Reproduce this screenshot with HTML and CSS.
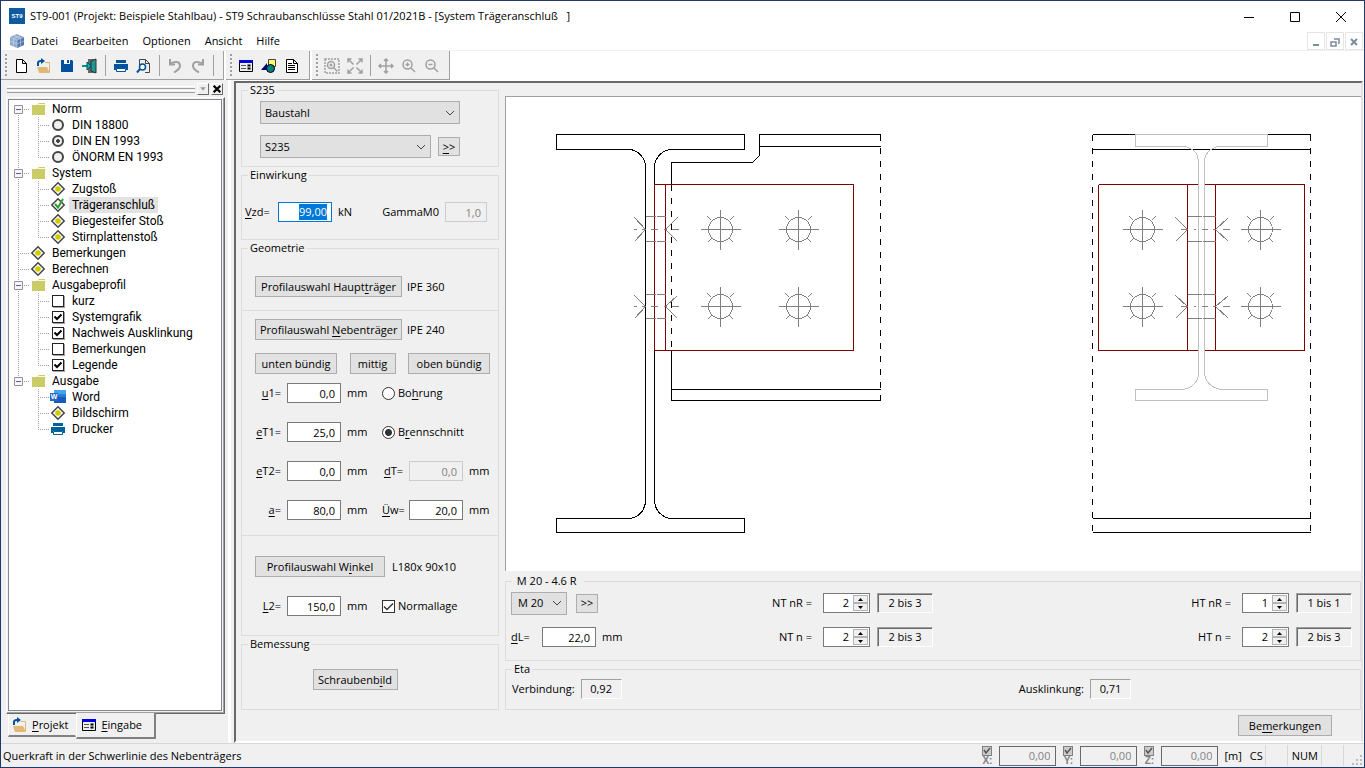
FILE: index.html
```html
<!DOCTYPE html>
<html lang="de">

<head>
    <meta charset="UTF-8">
    <meta name="viewport" content="width=device-width, initial-scale=1.0">
    <title>ST9-001 (Projekt: Beispiele Stahlbau)</title>
    <link rel="stylesheet" href="styles.css">
</head>

<body>
    <svg class="defs" aria-hidden="true">
        <symbol id="folder" viewBox="-1 0 16 16">
            <path d="M1 4h5l2-2h6v12H1z" fill="#cccc66" />
            <path d="M7 3.500h7" stroke="#fffbe8" />
        </symbol>
        <symbol id="diamond" viewBox="0 0 16 16">
            <path d="M8 1.800L14.200 8L8 14.200L1.800 8z" fill="#fff" stroke="#444" stroke-width="1.500" />
            <circle cx="8" cy="8" r="2.800" fill="#cccc00" />
        </symbol>
        <symbol id="printer" viewBox="0 0 16 16">
            <path d="M3 2h10v3H3zM1 6h14v6h-2v-2H3v2H1z" fill="currentColor" />
            <path d="M3.500 10.500h9v3h-9z" fill="#fff" stroke="currentColor" />
        </symbol>
        <symbol id="open" viewBox="0 0 16 16">
            <path d="M9 4.500h4.500V14" fill="none" stroke="#deb777" />
            <path d="M1 9h10l3 6H3z" fill="#e0b878" />
            <path d="M2 8V5q0-2 3-2h2" fill="none" stroke="#00529b" stroke-width="2" />
            <path d="M5 0l4 3l-4 3z" fill="#00529b" />
        </symbol>
        <symbol id="form" viewBox="0 0 16 16">
            <path d="M1.500 2.500h13v11h-13z" fill="#eee" stroke="#000" />
            <path d="M1 2h14v3H1z" fill="#0000e0" />
            <path d="M3 7.500h5M3 10.500h5" stroke="#555" />
            <path d="M9.500 7.500h3M9.500 10.500h3" stroke="#000" stroke-width="2" />
        </symbol>
        <symbol id="bolt" viewBox="-20 -20 40 40" overflow="visible">
            <circle r="12" />
            <path d="M-20 0H20M0-20V20M-13-13l4 4M13-13l-4 4M-13 13l4-4M13 13l-4-4" />
        </symbol>
    </svg>

    <header class="titlebar">
        <svg class="appicon" viewBox="0 0 16 16">
            <path d="M0 0h16v16H0z" fill="#0f5ba0" />
            <text x="8" y="10" text-anchor="middle">ST9</text>
        </svg>
        <h1>ST9-001 (Projekt: Beispiele Stahlbau) - ST9 Schraubanschlüsse Stahl 01/2021B - [System Trägeranschluß&nbsp;&nbsp; ]</h1>
        <div class="winbuttons">
            <button aria-label="Minimieren"><svg viewBox="0 0 12 12"><path d="M1 6.500h10" /></svg></button>
            <button aria-label="Maximieren"><svg viewBox="0 0 12 12"><path d="M1.500 1.500h9v9h-9z" /></svg></button>
            <button aria-label="Schließen"><svg viewBox="0 0 12 12"><path d="M1 1l10 10M11 1L1 11" /></svg></button>
        </div>
    </header>

    <nav class="menubar">
        <svg class="cube" viewBox="0 0 16 16">
            <path d="M8 1l7 3v8l-7 3l-7-3V4z" fill="#8fabcf" />
            <path d="M8 7v8l7-3V4z" fill="#5579ac" />
            <path d="M1 4l7 3l7-3M8 7v8M1 8l7 3l7-3M4.500 5.500v8M11.500 5.500v8M4.500 2.500l7 3M11.500 2.500l-7 3" fill="none" stroke="#d5e0ef" stroke-width="0.500" />
        </svg>
        <a href="#">Datei</a>
        <a href="#">Bearbeiten</a>
        <a href="#">Optionen</a>
        <a href="#">Ansicht</a>
        <a href="#">Hilfe</a>
        <div class="mdibuttons">
            <button aria-label="Fenster minimieren"><svg viewBox="0 0 10 10"><path d="M2 8h6" /></svg></button>
            <button aria-label="Fenster wiederherstellen"><svg viewBox="0 0 10 10"><path d="M4 2h5v4H8M1 5h5v4H1z" stroke-width="1.500" /></svg></button>
            <button aria-label="Fenster schließen"><svg viewBox="0 0 10 10"><path d="M2 2l6 6M8 2L2 8" /></svg></button>
        </div>
    </nav>

    <div class="toolbars">
        <div class="band">
            <i class="grip"></i>
            <button aria-label="Neu"><svg viewBox="0 0 16 16"><path d="M3.500 1.500h6l4 4v9h-10zM9.500 1.500v4h4" fill="#fff" stroke="#000" /></svg></button>
            <button aria-label="Öffnen"><svg><use href="#open" /></svg></button>
            <button aria-label="Speichern"><svg viewBox="0 0 16 16"><path d="M2 2h11l1 1v11H2z" fill="#0050a0" /><path d="M5 2h6v4H5z" fill="#fff" /><path d="M8 2h2v3H8z" fill="#0050a0" /></svg></button>
            <button aria-label="Beenden"><svg viewBox="0 0 16 16"><path d="M6 1h8v14H6z" fill="#666" /><path d="M9 3l5-2v14l-5-2z" fill="#1c9a93" stroke="#333" /><path d="M0 8h6" stroke="#00948c" stroke-width="2" /><path d="M5 4l4 4l-4 4z" fill="#00b8ac" stroke="#056" /></svg></button>
            <i class="sep"></i>
            <button class="blue" aria-label="Drucken"><svg><use href="#printer" /></svg></button>
            <button aria-label="Vorschau"><svg viewBox="0 0 16 16"><path d="M3.500 7V1.500h6l4 4v9H9M9.500 1.500v4h4" fill="none" stroke="#444" /><circle cx="6.500" cy="9" r="3" fill="#fff" stroke="#00529b" stroke-width="1.500" /><path d="M4 11l-3 3.500" stroke="#00529b" stroke-width="2" /></svg></button>
            <i class="sep"></i>
            <button class="off" aria-label="Rückgängig"><svg viewBox="0 0 16 16"><path d="M3 5.500q10-4 10 2.500Q13 11 7 14.500" /><path d="M3 1v5.500h5" /></svg></button>
            <button class="off" aria-label="Wiederholen"><svg viewBox="0 0 16 16"><path d="M13 5.500Q3 1.500 3 8Q3 11 9 14.500" /><path d="M13 1v5.500H8" /></svg></button>
            <i class="sep"></i>
        </div>
        <div class="band">
            <i class="grip"></i>
            <button aria-label="Eingabe"><svg><use href="#form" /></svg></button>
            <button aria-label="Grafik"><svg viewBox="0 0 16 16"><path d="M7.500 1.500h7v7h-7z" fill="#ffff66" stroke="#444" /><path d="M0 12l6-7v7z" fill="#000080" /><circle cx="9.500" cy="10.500" r="4" fill="#008080" stroke="#000" /></svg></button>
            <button aria-label="Ausgabe"><svg viewBox="0 0 16 16"><path d="M2.500 1.500h7l4 4v9h-11zM9.500 1.500v4h4" fill="#fff" stroke="#000" /><path d="M4 5.500h4M4 7.500h7M4 9.500h7M4 11.500h7" stroke="#000" /></svg></button>
        </div>
        <div class="band">
            <i class="grip"></i>
            <button class="off thin" aria-label="Ausschnitt"><svg viewBox="0 0 16 16"><path d="M1 1h14v14H1z" stroke-dasharray="2 1" /><circle cx="7" cy="7" r="3.500" /><path d="M9.500 9.500l4 4M5.500 7h3M7 5.500v3" /></svg></button>
            <button class="off thin" aria-label="Alles zeigen"><svg viewBox="0 0 16 16"><path d="M1 4.500V1h3.500M11.500 1H15v3.500M15 11.500V15h-3.500M4.500 15H1v-3.500M1 1l5.500 5.500M15 1L9.500 6.500M15 15L9.500 9.500M1 15l5.500-5.500" /></svg></button>
            <i class="sep"></i>
            <button class="off thin" aria-label="Verschieben"><svg viewBox="0 0 16 16"><path d="M1 8h14M8 1v14M3 6L1 8l2 2M13 6l2 2l-2 2M6 3l2-2l2 2M6 13l2 2l2-2" /></svg></button>
            <button class="off thin" aria-label="Vergrößern"><svg viewBox="0 0 16 16"><circle cx="6.500" cy="6.500" r="4.500" /><path d="M10 10l4 4M4.500 6.500h4M6.500 4.500v4" /></svg></button>
            <button class="off thin" aria-label="Verkleinern"><svg viewBox="0 0 16 16"><circle cx="6.500" cy="6.500" r="4.500" /><path d="M10 10l4 4M4.500 6.500h4" /></svg></button>
        </div>
    </div>

    <div class="workspace">
        <aside class="sidebar">
            <div class="dockbar">
                <i class="docklines"></i>
                <button class="dockbtn" aria-label="Menü"><svg viewBox="0 0 9 9"><path d="M2 3h5L4.500 6z" fill="#999" /></svg></button>
                <button class="dockbtn" aria-label="Schließen"><svg viewBox="0 0 9 9"><path d="M1.500 1.500l6 6M7.500 1.500l-6 6" stroke="#000" stroke-width="2" /></svg></button>
            </div>
            <div class="treeframe">
                <ul class="tree">
                    <li><i class="cell first"><button class="minus" aria-label="Zuklappen"></button></i><svg><use href="#folder" /></svg><span>Norm</span></li>
                    <li><i class="cell line"></i><i class="cell mid"></i><input type="radio" name="norm" id="n1"><label for="n1">DIN 18800</label></li>
                    <li><i class="cell line"></i><i class="cell mid"></i><input type="radio" name="norm" id="n2" checked><label for="n2">DIN EN 1993</label></li>
                    <li><i class="cell line"></i><i class="cell end"></i><input type="radio" name="norm" id="n3"><label for="n3">ÖNORM EN 1993</label></li>
                    <li><i class="cell mid"><button class="minus" aria-label="Zuklappen"></button></i><svg><use href="#folder" /></svg><span>System</span></li>
                    <li><i class="cell line"></i><i class="cell mid"></i><svg><use href="#diamond" /></svg><span>Zugstoß</span></li>
                    <li><i class="cell line"></i><i class="cell mid"></i><svg viewBox="0 0 16 16"><path d="M8 1.800L14.200 8L8 14.200L1.800 8z" fill="#fff" stroke="#444" stroke-width="1.500" /><path d="M5 7l3 3.500L13 2" fill="none" stroke="#2ca02c" stroke-width="2" /></svg><span class="selected">Trägeranschluß</span></li>
                    <li><i class="cell line"></i><i class="cell mid"></i><svg><use href="#diamond" /></svg><span>Biegesteifer Stoß</span></li>
                    <li><i class="cell line"></i><i class="cell end"></i><svg><use href="#diamond" /></svg><span>Stirnplattenstoß</span></li>
                    <li><i class="cell mid"></i><svg><use href="#diamond" /></svg><span>Bemerkungen</span></li>
                    <li><i class="cell mid"></i><svg><use href="#diamond" /></svg><span>Berechnen</span></li>
                    <li><i class="cell mid"><button class="minus" aria-label="Zuklappen"></button></i><svg><use href="#folder" /></svg><span>Ausgabeprofil</span></li>
                    <li><i class="cell line"></i><i class="cell mid"></i><input type="checkbox" id="p1"><label for="p1">kurz</label></li>
                    <li><i class="cell line"></i><i class="cell mid"></i><input type="checkbox" id="p2" checked><label for="p2">Systemgrafik</label></li>
                    <li><i class="cell line"></i><i class="cell mid"></i><input type="checkbox" id="p3" checked><label for="p3">Nachweis Ausklinkung</label></li>
                    <li><i class="cell line"></i><i class="cell mid"></i><input type="checkbox" id="p4"><label for="p4">Bemerkungen</label></li>
                    <li><i class="cell line"></i><i class="cell end"></i><input type="checkbox" id="p5" checked><label for="p5">Legende</label></li>
                    <li><i class="cell end"><button class="minus" aria-label="Zuklappen"></button></i><svg><use href="#folder" /></svg><span>Ausgabe</span></li>
                    <li><i class="cell"></i><i class="cell mid"></i><svg viewBox="0 0 16 16"><path d="M4 1h12v4H4z" fill="#41a5ee" /><path d="M4 5h12v3H4z" fill="#2b7cd3" /><path d="M4 8h12v6H4z" fill="#185abd" /><path d="M0 4h8v8H0z" fill="#2368c4" /><text class="wordmark" x="4" y="10" text-anchor="middle">W</text></svg><span>Word</span></li>
                    <li><i class="cell"></i><i class="cell mid"></i><svg><use href="#diamond" /></svg><span>Bildschirm</span></li>
                    <li><i class="cell"></i><i class="cell end"></i><svg class="teal"><use href="#printer" /></svg><span>Drucker</span></li>
                </ul>
            </div>
            <div class="tabs">
                <button class="tab"><svg><use href="#open" /></svg><span><u>P</u>rojekt</span></button>
                <button class="tab active"><svg><use href="#form" /></svg><span><u>E</u>ingabe</span></button>
            </div>
        </aside>

        <main class="dialog">
            <form class="inputs">
                <fieldset class="material">
                    <legend>S235</legend>
                    <select class="wide" aria-label="Stahlart"><option>Baustahl</option></select>
                    <div class="row">
                        <select class="grade" aria-label="Stahlsorte"><option>S235</option></select>
                        <button type="button" class="more"><u>&gt;</u>&gt;</button>
                    </div>
                </fieldset>

                <fieldset>
                    <legend>Einwirkung</legend>
                    <div class="load">
                        <label class="force" for="vzd"><u>V</u>zd=</label>
                        <span class="edit focus"><input id="vzd" class="marked" value="99,00"></span>
                        <span>kN</span>
                        <label class="gamma" for="gm0">GammaM0</label>
                        <input id="gm0" class="num small" value="1,0" disabled>
                    </div>
                </fieldset>

                <fieldset class="geometry">
                    <legend>Geometrie</legend>
                    <section class="girder">
                        <button type="button" class="profile">Profilauswahl Haupt<u>t</u>räger</button>
                        <span>IPE 360</span>
                    </section>
                    <section class="beam">
                        <div class="row">
                            <button type="button" class="profile">Profilauswahl <u>N</u>ebenträger</button>
                            <span>IPE 240</span>
                        </div>
                        <div class="row align">
                            <button type="button" class="side">unten bündig</button>
                            <button type="button" class="middle">mittig</button>
                            <button type="button" class="side">oben bündig</button>
                        </div>
                        <div class="fields">
                            <label for="u1"><u>u</u>1=</label><input id="u1" class="num" value="0,0"><span>mm</span>
                            <label class="opt"><input type="radio" name="cut"><span>Bo<u>h</u>rung</span></label>
                            <label for="et1"><u>e</u>T1=</label><input id="et1" class="num" value="25,0"><span>mm</span>
                            <label class="opt"><input type="radio" name="cut" checked><span>B<u>r</u>ennschnitt</span></label>
                            <label for="et2"><u>e</u>T2=</label><input id="et2" class="num" value="0,0"><span>mm</span>
                            <label for="dt"><u>d</u>T=</label><input id="dt" class="num" value="0,0" disabled><span>mm</span>
                            <label for="a"><u>a</u>=</label><input id="a" class="num" value="80,0"><span>mm</span>
                            <label for="uew"><u>Ü</u>w=</label><input id="uew" class="num" value="20,0"><span>mm</span>
                        </div>
                    </section>
                    <section class="angle">
                        <div class="row">
                            <button type="button" class="winkel">Profilauswahl W<u>i</u>nkel</button>
                            <span>L180x 90x10</span>
                        </div>
                        <div class="fields">
                            <label for="l2"><u>L</u>2=</label><input id="l2" class="num" value="150,0"><span>mm</span>
                            <label class="opt"><input type="checkbox" checked><span>Normallage</span></label>
                        </div>
                    </section>
                </fieldset>

                <fieldset>
                    <legend>Bemessung</legend>
                    <div class="design">
                        <button type="button">Schraubenb<u>i</u>ld</button>
                    </div>
                </fieldset>
            </form>

            <div class="result">
                <div class="canvas">
                    <!-- origin shifted by half a unit so whole numbers hit pixel centres -->
                    <svg viewBox="505.500 96.500 855 474">
                        <!-- main girder IPE 360 -->
                        <g class="black">
                            <path d="M628 149H556V134H744V149H672A18 18 0 0 0 654 167V500A18 18 0 0 0 672 518H744V532H556V518H628A17 18 0 0 0 645 500V167A17 18 0 0 0 628 149z" />
                            <path d="M880 134H759V155L752 162H671V184M759 146H880M671 350V400H880M671 389H880" />
                            <path class="dash" d="M671 184V350M880 134V400" />
                        </g>
                        <path class="red" d="M654 184H853V350H654zM665 184V350" />
                        <g class="grey">
                            <use href="#bolt" x="700" y="209" width="40" height="40" />
                            <use href="#bolt" x="778" y="209" width="40" height="40" />
                            <use href="#bolt" x="700" y="286" width="40" height="40" />
                            <use href="#bolt" x="778" y="286" width="40" height="40" />
                            <path d="M645 216H655M656 216H665M645 241H655M656 241H665M634 217L645 229L634 241M677 217L665 229L677 241M633 229H636M641 229H645M650 229H657M663 229H666M671 229H678" />
                            <path d="M645 294H655M656 294H665M645 318H655M656 318H665M634 295L645 306L634 318M677 295L665 306L677 318M633 306H636M641 306H645M650 306H657M663 306H666M671 306H678" />
                        </g>

                        <!-- side view -->
                        <g class="black">
                            <path d="M1092 134H1310M1092 149H1310M1092 518H1310M1092 532H1310" />
                            <path class="dash" d="M1092 134V532M1310 134V532" />
                        </g>
                        <path class="red" d="M1098 184H1198M1204 184H1304V350H1204M1198 350H1098V184M1187 184V350M1215 184V350" />
                        <path class="light" d="M1185 146H1135V134H1267V146H1217L1210 149Q1204 154 1204 161V373Q1206 386 1220 389H1267V400H1135V389H1183Q1197 386 1198 373V161Q1197 152 1192 149z" />
                        <g class="grey">
                            <use href="#bolt" x="1122" y="209" width="40" height="40" />
                            <use href="#bolt" x="1240" y="209" width="40" height="40" />
                            <use href="#bolt" x="1122" y="286" width="40" height="40" />
                            <use href="#bolt" x="1240" y="286" width="40" height="40" />
                            <path d="M1187 216H1201M1202 216H1215M1187 241H1201M1202 241H1215M1175 217L1187 229L1175 241M1228 217L1215 229L1228 241M1180 229H1187M1193 229H1195M1201 229H1207M1212 229H1215M1222 229H1229" />
                            <path d="M1187 294H1201M1202 294H1215M1187 318H1201M1202 318H1215M1175 295L1187 306L1175 318M1228 295L1215 306L1228 318M1180 306H1187M1193 306H1195M1201 306H1207M1212 306H1215M1222 306H1229" />
                        </g>
                    </svg>
                </div>

                <fieldset>
                    <legend>&nbsp;M 20 - 4.6 R&nbsp;&nbsp;</legend>
                    <div class="bolts">
                        <div class="size">
                            <div class="row">
                                <select class="dia" aria-label="Schraube"><option>M 20</option></select>
                                <button type="button" class="more">&gt;&gt;</button>
                            </div>
                            <div class="row">
                                <label for="dl"><u>d</u>L=</label><input id="dl" class="num" value="22,0"><span>mm</span>
                            </div>
                        </div>
                        <div class="counts">
                            <label for="ntr">NT nR =</label>
                            <span class="spin"><input id="ntr" value="2"><span><button type="button" aria-label="mehr"></button><button type="button" aria-label="weniger" class="down"></button></span></span>
                            <output>2 bis 3</output>
                            <label for="ntn">NT n =</label>
                            <span class="spin"><input id="ntn" value="2"><span><button type="button" aria-label="mehr"></button><button type="button" aria-label="weniger" class="down"></button></span></span>
                            <output>2 bis 3</output>
                        </div>
                        <div class="counts last">
                            <label for="htr">HT nR =</label>
                            <span class="spin"><input id="htr" value="1"><span><button type="button" aria-label="mehr"></button><button type="button" aria-label="weniger" class="down"></button></span></span>
                            <output>1 bis 1</output>
                            <label for="htn">HT n =</label>
                            <span class="spin"><input id="htn" value="2"><span><button type="button" aria-label="mehr"></button><button type="button" aria-label="weniger" class="down"></button></span></span>
                            <output>2 bis 3</output>
                        </div>
                    </div>
                </fieldset>

                <fieldset>
                    <legend>Eta</legend>
                    <div class="eta">
                        <div class="row"><label for="verb">Verbindung:</label><output id="verb">0,92</output></div>
                        <div class="row"><label for="ausk">Ausklinkung:</label><output id="ausk">0,71</output></div>
                    </div>
                </fieldset>

                <div class="actions">
                    <button type="button">Be<u>m</u>erkungen</button>
                </div>
            </div>
        </main>
    </div>

    <footer class="statusbar">
        <p>Querkraft in der Schwerlinie des Nebenträgers</p>
        <label class="axis"><input type="checkbox" checked disabled><span>X:</span></label>
        <input class="coord" aria-label="X" value="0,00" disabled>
        <label class="axis"><input type="checkbox" checked disabled><span>Y:</span></label>
        <input class="coord" aria-label="Y" value="0,00" disabled>
        <label class="axis"><input type="checkbox" checked disabled><span>Z:</span></label>
        <input class="coord" aria-label="Z" value="0,00" disabled>
        <span class="unit">[m]</span>
        <span class="pane">CS</span>
        <span class="pane blank"></span>
        <span class="pane numlock">NUM</span>
        <span class="pane blank"></span>
        <svg class="sizegrip" viewBox="0 0 12 12"><path d="M8 0h2v2H8zM4 4h2v2H4zM8 4h2v2H8zM0 8h2v2H0zM4 8h2v2H4zM8 8h2v2H8z" fill="#bbb" /></svg>
    </footer>
</body>

</html>
```

FILE: styles.css
```css
* {
    box-sizing: border-box;
}

body {
    margin: 0;
    height: 100vh;
    display: flex;
    flex-direction: column;
    overflow: hidden;
    border: 1px solid #1f3a68;
    background: #fff;
    color: #000;
    font: 11px/16px "Open Sans", "Noto Sans", sans-serif;
    white-space: nowrap;
}

button,
input,
select {
    font: inherit;
    color: inherit;
    margin: 0;
    padding: 0;
    border-radius: 0;
}

ul,
p,
h1 {
    margin: 0;
    padding: 0;
    font-size: inherit;
    font-weight: normal;
}

u {
    text-underline-offset: 2px;
}

.defs {
    display: none;
}

/* ---------- title and menu ---------- */
.titlebar {
    display: flex;
    align-items: center;
    height: 30px;
    padding-left: 8px;
}

.titlebar h1 {
    margin-left: 5px;
}

.appicon,
.cube {
    width: 16px;
    height: 16px;
}

.appicon text {
    font: bold 6px "Liberation Sans", sans-serif;
    fill: #fff;
}

.winbuttons {
    display: flex;
    margin-left: auto;
}

.winbuttons button {
    width: 46px;
    height: 28px;
    border: 0;
    background: none;
}

.winbuttons svg {
    width: 12px;
    height: 12px;
    fill: none;
    stroke: #000;
    vertical-align: middle;
}

.menubar {
    display: flex;
    align-items: center;
    height: 20px;
    padding: 0 1px 0 8px;
    border-bottom: 1px solid #f0f0f0;
}

.menubar a {
    color: #000;
    text-decoration: none;
    margin-right: 14px;
}

.cube {
    margin-right: 6px;
}

.mdibuttons {
    display: flex;
    gap: 1px;
    margin-left: auto;
}

.mdibuttons button {
    width: 18px;
    height: 18px;
    border: 1px solid #e5e5e5;
    background: #fff;
}

.mdibuttons svg {
    width: 10px;
    height: 10px;
    fill: none;
    stroke: #7d8ba0;
    stroke-width: 2;
    vertical-align: middle;
}

/* ---------- toolbars ---------- */
.toolbars {
    display: flex;
    gap: 2px;
    height: 29px;
}

.band {
    display: flex;
    align-items: center;
    padding: 0 6px 0 3px;
    border-right: 1px solid #a0a0a0;
    border-bottom: 1px solid #a0a0a0;
    background: #f0f0f0;
}

.grip {
    width: 5px;
    height: 24px;
    background: radial-gradient(#a0a0a0 1px, transparent 1px) 0 0 / 4px 4px;
}

.band button {
    width: 23px;
    height: 22px;
    border: 0;
    background: none;
}

.band svg {
    width: 16px;
    height: 16px;
    vertical-align: middle;
}

.blue {
    color: #00529b;
}

.off svg {
    fill: none;
    stroke: #a0a0a0;
    stroke-width: 2;
}

.thin svg {
    stroke-width: 1.500;
}

.sep {
    width: 8px;
    height: 21px;
    background: linear-gradient(#a0a0a0, #a0a0a0) 4px 0 / 1px 100% no-repeat;
}

/* ---------- sidebar ---------- */
.workspace {
    flex: 1;
    display: flex;
    min-height: 0;
}

.sidebar {
    display: flex;
    flex-direction: column;
    width: 233px;
    padding: 3px 9px 4px 5px;
    background: linear-gradient(90deg, #f0f0f0 227px, #fff 227px 230px, #f0f0f0 230px);
}

.dockbar {
    display: flex;
    align-items: center;
    gap: 2px;
    height: 12px;
    padding: 0 2px 0 1px;
    margin-bottom: 2px;
}

.docklines {
    flex: 1;
    height: 7px;
    background: repeating-linear-gradient(#fff 0 1px, transparent 1px 2px, #a0a0a0 2px 3px, transparent 3px 4px);
}

.dockbtn {
    display: flex;
    width: 12px;
    height: 12px;
    border: 1px solid;
    border-color: #fff #696969 #696969 #fff;
    background: #f0f0f0;
}

.treeframe {
    flex: 1;
    min-height: 0;
    padding: 1px 2px 2px 1px;
    border: 1px solid;
    border-color: #fff #696969 #696969 #fff;
    box-shadow: inset -1px -1px #a0a0a0;
}

.tree {
    height: 100%;
    padding-top: 1px;
    border: 1px solid #828790;
    background: #fff;
    font-family: Roboto, sans-serif;
    font-size: 12px;
    list-style: none;
}

.tree li {
    display: flex;
    align-items: center;
    height: 16px;
}

.tree svg {
    width: 16px;
    height: 16px;
    margin: 0 3px 0 1px;
}

.tree span,
.tree label {
    padding: 0 3px;
}

.tree .selected {
    background: #e2e2e2;
}

.tree .teal {
    color: #00629b;
}

.wordmark {
    font: bold 7px "Liberation Sans", sans-serif;
    fill: #fff;
}

/* guide lines: vertical at 9px, horizontal half way down */
.cell {
    --v: repeating-linear-gradient(#a0a0a0 0 1px, transparent 1px 2px);
    --h: repeating-linear-gradient(90deg, #a0a0a0 0 1px, transparent 1px 2px);
    display: flex;
    align-items: center;
    width: 20px;
    height: 16px;
    padding-left: 5px;
    background-repeat: no-repeat;
}

.line {
    background-image: var(--v);
    background-position: 9px 0;
    background-size: 1px 16px;
}

.mid,
.end,
.first {
    background-image: var(--v), var(--h);
    background-position: 9px 0, 9px 8px;
    background-size: 1px 16px, 11px 1px;
}

.end {
    background-size: 1px 8px, 11px 1px;
}

.first {
    background-position: 9px 8px, 9px 8px;
    background-size: 1px 8px, 11px 1px;
}

.minus {
    width: 9px;
    height: 9px;
    border: 1px solid #919191;
    border-radius: 1px;
    background: linear-gradient(#4b63a7, #4b63a7) 1px 3px / 5px 1px no-repeat #f6f6f6;
}

.tree input {
    appearance: none;
    width: 12px;
    height: 12px;
    margin: 0 5px 0 3px;
}

.tree input[type="radio"] {
    border: 2px solid #444;
    border-radius: 50%;
    background: #f0f0f0;
}

.tree input[type="radio"]:checked {
    background: radial-gradient(#444 2px, #f0f0f0 2px);
}

.tree input[type="checkbox"] {
    border: 1px solid #222;
    box-shadow: 1px 1px #a0a0a0;
    background: #fff;
}

.tree input[type="checkbox"]:checked {
    background: url("data:image/svg+xml,%3Csvg xmlns='http://www.w3.org/2000/svg' viewBox='0 0 10 10'%3E%3Cpath d='M1.500 4.500l2.500 2.500l4.500-4.500' fill='none' stroke='%23000' stroke-width='2'/%3E%3C/svg%3E") center / 10px 10px no-repeat #fff;
}

.tabs {
    display: flex;
    align-items: flex-start;
    padding-left: 2px;
    font-size: 12px;
}

.tab {
    display: flex;
    align-items: center;
    gap: 4px;
    height: 23px;
    padding: 0 7px 0 3px;
    border: solid;
    border-width: 0 1px 2px 1px;
    border-color: #696969 #f0f0f0 #808080 #fff;
    background: #f0f0f0;
    font-size: 11px;
}

.tab svg {
    width: 16px;
    height: 16px;
}

.tab.active {
    height: 26px;
    margin-top: -1px;
    padding: 0 12px 0 4px;
    border-right: 2px solid #808080;
}

/* ---------- dialog ---------- */
.dialog {
    flex: 1;
    min-width: 0;
    display: grid;
    grid-template-columns: 258px minmax(0, 1fr);
    column-gap: 6px;
    margin: 1px 1px 0 0;
    padding-left: 5px;
    border: solid;
    border-width: 2px;
    border-color: #696969 #e3e3e3 #fff #696969;
    background: #f0f0f0;
}

.inputs {
    display: flex;
    flex-direction: column;
    gap: 1px;
}

fieldset {
    min-width: 0;
    margin: 0;
    padding: 0;
    border: 1px solid #dcdcdc;
}

legend {
    height: 14px;
    margin-left: 6px;
    padding: 0 2px;
    line-height: 14px;
}

.row {
    display: flex;
    align-items: center;
}

.dialog button {
    height: 21px;
    padding: 0 4px;
    border: 1px solid #adadad;
    background: #e1e1e1;
    line-height: 18px;
}

.dialog .more {
    width: 22px;
    height: 19px;
    padding: 0;
    line-height: 16px;
}

select {
    appearance: none;
    height: 23px;
    padding-left: 4px;
    border: 1px solid #adadad;
    background: url("data:image/svg+xml,%3Csvg xmlns='http://www.w3.org/2000/svg' viewBox='0 0 10 6'%3E%3Cpath d='M1 1l4 4l4-4' fill='none' stroke='%23444'/%3E%3C/svg%3E") right 4px center / 10px 6px no-repeat #e1e1e1;
}

.num,
.edit,
.coord {
    width: 54px;
    height: 20px;
    padding-right: 5px;
    border: 1px solid #7a7a7a;
    background: #fff;
    text-align: right;
}

.num:disabled {
    border-color: #ccc;
    background: #f0f0f0;
    color: #838383;
}

.small {
    width: 42px;
}

.focus {
    display: flex;
    justify-content: flex-end;
    align-items: center;
    padding-right: 4px;
    border-color: #0078d7;
}

.marked {
    width: 28px;
    height: 16px;
    border: 0;
    background: #0078d7;
    color: #fff;
    text-align: right;
}

.material {
    padding: 4px 0 8px;
}

.wide {
    display: block;
    width: 200px;
    margin: 0 0 11px 18px;
}

.grade {
    width: 171px;
    margin: 0 7px 0 18px;
}

.load {
    display: flex;
    align-items: center;
    gap: 6px;
    padding: 20px 11px 17px 3px;
}

.force {
    width: 27px;
}

.gamma {
    margin-left: auto;
}

.geometry section {
    padding-left: 13px;
}

.geometry section + section {
    border-top: 1px solid #dcdcdc;
}

.geometry .girder {
    display: flex;
    align-items: center;
    padding-top: 21px;
    padding-bottom: 13px;
}

.profile {
    width: 147px;
    margin-right: 5px;
}

.beam {
    padding: 8px 8px 15px 0;
}

.align {
    justify-content: space-between;
    margin: 13px 0 9px;
}

.side {
    width: 82px;
}

.middle {
    width: 46px;
}

.fields {
    display: grid;
    grid-template-columns: 26px 54px 29px 21px 54px 1fr;
    column-gap: 6px;
    row-gap: 19px;
    align-items: center;
}

.fields > label {
    text-align: right;
}

.fields .opt {
    grid-column: 4 / -1;
    display: flex;
    align-items: center;
    gap: 3px;
    text-align: left;
}

.opt input {
    appearance: none;
    width: 13px;
    height: 13px;
    border: 1px solid #333;
    background: #fff;
}

.opt input[type="radio"] {
    border-radius: 50%;
}

.opt input[type="radio"]:checked {
    background: radial-gradient(#333 3px, #fff 4px);
}

.opt input[type="checkbox"]:checked {
    background: url("data:image/svg+xml,%3Csvg xmlns='http://www.w3.org/2000/svg' viewBox='0 0 11 11'%3E%3Cpath d='M1 5.500l3 3l6-6' fill='none' stroke='%23333' stroke-width='1.500'/%3E%3C/svg%3E") center / 11px 11px no-repeat #fff;
}

.angle {
    padding-top: 20px;
    padding-bottom: 19px;
}

.angle .row {
    margin-bottom: 19px;
}

.winkel {
    width: 130px;
    margin-right: 7px;
}

.design {
    display: flex;
    justify-content: center;
    padding: 18px 30px 19px 0;
}

.design button {
    width: 85px;
}

/* ---------- drawing and results ---------- */
.result {
    display: flex;
    flex-direction: column;
    gap: 1px;
    min-height: 0;
}

.canvas {
    flex: 1;
    min-height: 0;
    margin: 13px 0 2px;
    border: solid #a0a0a0;
    border-width: 1px 0 0 1px;
    background: #fff;
}

.canvas svg {
    display: block;
    width: 100%;
    height: 100%;
    fill: none;
    shape-rendering: crispEdges;
}

.black {
    stroke: #000;
}

.dash {
    stroke-dasharray: 6 7;
}

.red {
    stroke: #800000;
}

.grey {
    stroke: #808080;
}

.light {
    stroke: #c0c0c0;
}

.bolts {
    display: flex;
    padding: 3px 8px 11px 5px;
}

.size {
    display: grid;
    grid-template-rows: 24px 24px;
    row-gap: 10px;
    width: 252px;
}

.dia {
    width: 56px;
    padding-left: 6px;
    margin-right: 9px;
}

.size label {
    width: 31px;
}

.size .num {
    margin-right: 6px;
}

.counts {
    display: grid;
    grid-template-columns: 53px 47px 56px;
    grid-template-rows: 24px 24px;
    gap: 10px 7px;
    align-items: center;
}

.counts label {
    padding-right: 4px;
    text-align: right;
}

.last {
    margin-left: auto;
}

.spin {
    display: flex;
    height: 20px;
    padding: 1px;
    border: 1px solid #7a7a7a;
    background: #fff;
}

.spin input {
    flex: 1;
    width: 0;
    padding-right: 4px;
    border: 0;
    text-align: right;
}

.spin > span {
    display: flex;
    flex-direction: column;
    width: 15px;
}

.spin button {
    flex: 1;
    height: 8px;
    padding: 0;
    border: 1px solid #b4b4b4;
    background: url("data:image/svg+xml,%3Csvg xmlns='http://www.w3.org/2000/svg' viewBox='0 0 5 3'%3E%3Cpath d='M0 3l2.500-3l2.500 3z'/%3E%3C/svg%3E") center / 5px 3px no-repeat #f0f0f0;
}

.spin .down {
    background-image: url("data:image/svg+xml,%3Csvg xmlns='http://www.w3.org/2000/svg' viewBox='0 0 5 3'%3E%3Cpath d='M0 0l2.500 3l2.500-3z'/%3E%3C/svg%3E");
}

output {
    height: 20px;
    border: 1px solid;
    border-color: #a0a0a0 #fff #fff #a0a0a0;
    line-height: 18px;
    text-align: center;
}

.counts output {
    box-shadow: inset 1px 1px #696969;
}

.eta {
    display: flex;
    justify-content: space-between;
    padding: 3px 229px 10px 6px;
}

.eta label {
    margin-right: 6px;
}

.eta output {
    width: 41px;
}

.actions {
    display: flex;
    justify-content: flex-end;
    padding: 4px 29px 5px;
}

.actions button {
    width: 94px;
}

/* ---------- status bar ---------- */
.statusbar {
    display: flex;
    align-items: center;
    height: 24px;
    padding-left: 2px;
    border-top: 1px solid #d7d7d7;
    background: #f0f0f0;
}

.statusbar p {
    flex: 1;
}

.axis {
    display: flex;
    flex-direction: column;
    align-items: center;
    width: 12px;
    margin: 0 6px;
    color: #808080;
    font: bold 10px/10px "Liberation Sans", sans-serif;
}

.axis input {
    appearance: none;
    width: 10px;
    height: 10px;
    border: 1px solid #808080;
    background: url("data:image/svg+xml,%3Csvg xmlns='http://www.w3.org/2000/svg' viewBox='0 0 8 8'%3E%3Cpath d='M1 3l2 3l4-5' fill='none' stroke='%23555' stroke-width='1.500'/%3E%3C/svg%3E") center / 8px 8px no-repeat #ccc;
}

.coord {
    width: 57px;
    border-color: #696969;
    background: #f0f0f0;
    color: #838383;
}

.unit {
    margin: 0 8px 0 6px;
}

.pane {
    height: 21px;
    padding-right: 2px;
    border-right: 1px solid #d7d7d7;
    line-height: 21px;
}

.blank {
    width: 22px;
}

.numlock {
    padding: 0 3px 0 4px;
}

.sizegrip {
    width: 12px;
    height: 12px;
    align-self: flex-end;
    margin-left: 8px;
}
```
